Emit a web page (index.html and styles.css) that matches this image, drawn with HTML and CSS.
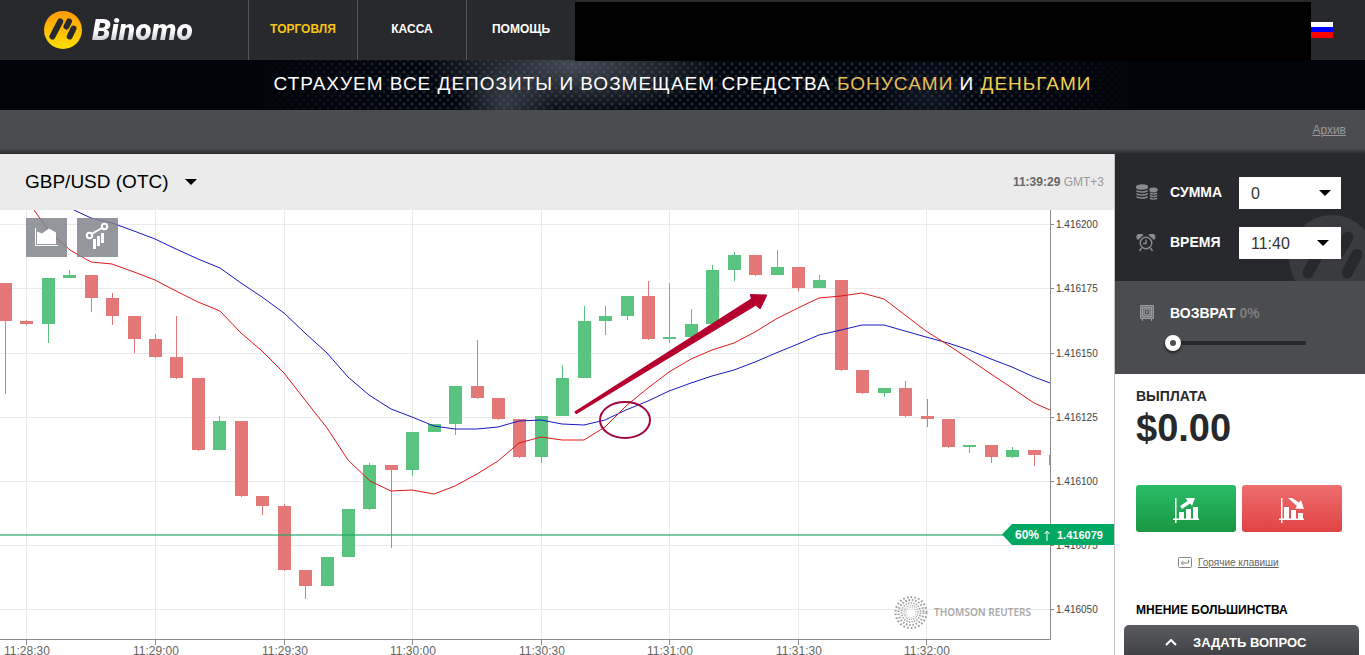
FILE: index.html
```
<!DOCTYPE html>
<html lang="ru">
<head>
    <meta charset="UTF-8">
    <meta name="viewport" content="width=device-width, initial-scale=1.0">
    <title>Binomo</title>

    <link rel="stylesheet" href="styles.css">
</head>
<body>
    <header class="header">
        <a class="logo" href="#">
            <svg class="logo-mark" viewBox="0 0 38 38">
                <defs>
                    <linearGradient id="gold" x1="0" y1="0" x2="0" y2="1">
                        <stop offset="0" stop-color="#ff9a05"/>
                        <stop offset="1" stop-color="#ffe000"/>
                    </linearGradient>
                </defs>
                <circle cx="19" cy="19" r="19" fill="url(#gold)"/>
                <path d="M8.4 25.5 16.2 10.5M22.5 15.500 25 10.5M25.7 25.5 29.500 17.5" stroke="#28292d" stroke-width="6" stroke-linecap="round"/>
            </svg>
            <span class="logo-text">Binomo</span>
        </a>
        <nav class="menu">
            <a class="active" href="#">ТОРГОВЛЯ</a>
            <a href="#">КАССА</a>
            <a href="#">ПОМОЩЬ</a>
        </nav>
        <div class="account"></div>
        <div class="lang">
            <svg class="flag" viewBox="0 0 22 16">
                <path fill="#fff" d="M0 0h22v5H0z"/>
                <path fill="#00f" d="M0 5h22v5H0z"/>
                <path fill="#f00" d="M0 10h22v6H0z"/>
            </svg>
        </div>
    </header>

    <div class="banner">
        <p>СТРАХУЕМ ВСЕ ДЕПОЗИТЫ И ВОЗМЕЩАЕМ СРЕДСТВА <span class="bonus">БОНУСАМИ</span> И <span class="money">ДЕНЬГАМИ</span></p>
    </div>

    <div class="subbar"><a href="#">Архив</a></div>

    <main class="trade">
        <section class="chart">
            <div class="chart-head">
                <button type="button" class="asset">GBP/USD (OTC)</button>
                <div class="clock"><b>11:39:29</b> GMT+3</div>
            </div>
            <div class="chart-body">
                <svg class="plot" viewBox="0 210 1114 445" preserveAspectRatio="xMinYMin slice">
                    <defs>
                        <clipPath id="area"><path d="M0 210h1050v429H0z"/></clipPath>
                    </defs>
                    <g id="grid"></g>
                    <g clip-path="url(#area)">
                        <g id="candles"></g>
                        <polyline class="ma blue" points="74,210 91,218 112,223 134,231 155,239 176,249 198,259 220,268 241,283 262,297 284,313 305,333 327,353 348,377 369,395 391,409 412,417 434,426 455,429 477,429 498,427 519,421 541,420 562,424 584,425 605,420 626,410 648,401 669,391 691,383 712,376 734,370 755,362 776,353 798,344 819,335 841,330 862,325 884,325 905,331 926,337 948,343 969,350 991,359 1012,367 1034,377 1050,383"/>
                        <polyline class="ma red" points="34,210 49,231 70,250 91,262 112,264 134,272 155,280 176,291 198,302 220,311 241,333 262,351 284,373 305,400 327,428 348,460 370,481 391,491 412,490 434,494 455,486 477,474 498,461 519,443 541,437 562,440 584,440 605,427 626,406 648,388 669,372 691,359 712,350 734,343 755,332 776,319 798,308 819,298 841,296 862,293 884,299 905,315 926,331 948,345 969,359 991,374 1012,388 1034,403 1050,410"/>
                    </g>
                    <path class="axis" d="M0 639.5H1050.5V210"/>
                    <g id="labels"></g>

                    <!-- Thomson Reuters -->
                    <g fill="none" stroke="#999">
                        <circle cx="911" cy="612.5" r="15.5" stroke-width="2" stroke-dasharray="1.6 2.2"/>
                        <circle cx="911" cy="612.5" r="12.5" stroke-width="2" stroke-dasharray="1.5 1.8"/>
                        <circle cx="911" cy="612.5" r="9.5" stroke-width="1.6" stroke-dasharray="1.3 1.3"/>
                        <circle cx="911" cy="612.5" r="7" stroke-width="1.2" stroke-dasharray="1 1"/>
                        <circle cx="911" cy="612.5" r="5" stroke-width=".8" stroke-dasharray=".8 .8"/>
                    </g>
                    <text class="reuters" x="934" y="616">THOMSON REUTERS</text>

                    <!-- current rate -->
                    <path class="rate-line" d="M0 535H1003"/>
                    <path fill="#00a862" d="M1002 534.5 1012 524h102v21h-102z"/>
                    <text class="rate-percent" x="1015" y="539">60%</text>
                    <path d="M1047 541v-10m-2.5 3 2.5-3 2.5 3" fill="none" stroke="#fff"/>
                    <text class="rate-value" x="1057" y="539">1.416079</text>

                    <!-- signal -->
                    <ellipse cx="625" cy="420" rx="25" ry="18" fill="none" stroke="#a3063c" stroke-width="2"/>
                    <path fill="#b5002f" stroke="#b5002f" stroke-width="2" stroke-linejoin="round" d="M575.500 412 752 299 751 295 766 295.500 760 308 756 304.500 576.500 413z"/>
                </svg>
                <div class="tools">
                    <button type="button" aria-label="Тип графика">
                        <svg viewBox="0 0 41 39">
                            <path d="M9.5 10v17.5H32" fill="none" stroke="#fff"/>
                            <path d="M11 26V13.5l5 2 7-5 7 4V26z" fill="#fff"/>
                        </svg>
                    </button>
                    <button type="button" aria-label="Индикаторы">
                        <svg viewBox="0 0 41 39">
                            <path d="M14.5 16 25 10" stroke="#fff" stroke-width="2"/>
                            <circle cx="12.5" cy="17.5" r="2.7" fill="none" stroke="#fff" stroke-width="2"/>
                            <circle cx="27.5" cy="8.5" r="2.7" fill="none" stroke="#fff" stroke-width="2"/>
                            <path d="M16 21h3v10h-3zM20 18h3v10h-3zM24 15h3v10h-3z" fill="#fff"/>
                        </svg>
                    </button>
                </div>
            </div>
        </section>

        <aside class="panel">
            <div class="deal">
                <svg class="watermark" viewBox="0 0 38 38">
                    <circle cx="19" cy="19" r="19" fill="#3a3b3f"/>
                    <path d="M8.4 25.5 16.5 10.5M22.5 16 26 9.8M25.7 25.5 30 17.5" stroke="#28292d" stroke-width="5" stroke-linecap="round"/>
                </svg>
                <div class="field">
                    <svg class="icon" viewBox="0 0 22 18" fill="none" stroke="#8a8b8e" stroke-width="1.4">
                        <ellipse cx="6" cy="3" rx="5.5" ry="2" fill="#8a8b8e"/>
                        <path d="M.5 6.500c1.5 2 9.500 2 11 0M.5 9.500c1.5 2 9.5 2 11 0M.5 12.500c1.5 2 9.5 2 11 0"/>
                        <ellipse cx="17.5" cy="6" rx="3.5" ry="1.7" fill="#8a8b8e"/>
                        <path d="M14 9c1 1.5 6 1.5 7 0M14 11.500c1 1.5 6 1.5 7 0M14 14c1 1.5 6 1.5 7 0"/>
                    </svg>
                    <label for="amount">СУММА</label>
                    <div class="select"><select id="amount"><option>0</option></select></div>
                </div>
                <div class="field time">
                    <svg class="icon" viewBox="0 0 22 18" fill="none" stroke="#8a8b8e" stroke-width="1.4">
                        <circle cx="10" cy="9" r="5.8"/>
                        <path d="M10 5.5v4H7M5.5 14l-2 3M14.5 14l2 3"/>
                        <path d="M2 5a3 3 0 0 1 4.5-4zM18 5a3 3 0 0 0-4.5-4z" fill="#8a8b8e"/>
                    </svg>
                    <label for="time">ВРЕМЯ</label>
                    <div class="select"><select id="time"><option>11:40</option></select></div>
                </div>
            </div>

            <div class="refund">
                <div class="refund-title">
                    <svg class="icon" viewBox="0 0 22 18" fill="none" stroke="#98999b">
                        <path d="M4.5 1.5h13v13h-13z" fill="#77787a"/>
                        <path d="M6.5 3.5h9v9h-9zM6.500 15v2M15.500 15v2"/>
                        <circle cx="11" cy="8" r="3" fill="#4a4b4e"/>
                        <circle cx="11" cy="8" r="1"/>
                    </svg>
                    <label for="refund">ВОЗВРАТ <span>0%</span></label>
                </div>
                <input type="range" id="refund" min="0" max="10" value="0">
            </div>

            <div class="payout">
                <h2>ВЫПЛАТА</h2>
                <p class="sum">$0.00</p>
                <div class="buttons">
                    <button type="button" class="up" aria-label="Выше">
                        <svg viewBox="0 0 26 25" fill="#fff">
                            <path d="M2 0h1.5v25H2zM0 20.5h26V22H0zM6 14h5v7H6zM13 11h5v10h-5zM20 9h5v12h-5z"/>
                            <path d="M7 8 14.500 3 12.500 0H22L19 8 17 5.500 9 11z"/>
                        </svg>
                    </button>
                    <button type="button" class="down" aria-label="Ниже">
                        <svg viewBox="0 0 26 25" fill="#fff">
                            <path d="M2 0h1.5v25H2zM0 20.5h25V22H0zM5 9h5v12H5zM12 12h5v9h-5zM19 15h5v6h-5z"/>
                            <path d="M9 0h4l7 4.500L22 2l3 9-9-.5L18 8z"/>
                        </svg>
                    </button>
                </div>
                <p class="hotkeys">
                    <svg viewBox="0 0 14 11" fill="none" stroke="#888">
                        <rect x=".5" y=".5" width="13" height="10" rx="1"/>
                        <path d="M10.5 3v3h-7M5.5 4l-2 2 2 2"/>
                    </svg>
                    <a href="#">Горячие клавиши</a>
                </p>
                <h3>МНЕНИЕ БОЛЬШИНСТВА</h3>
            </div>
        </aside>
    </main>

    <button type="button" class="ask">
        <svg viewBox="0 0 12 7" fill="none" stroke="#fff" stroke-width="2"><path d="M1 6l5-5 5 5"/></svg>
        ЗАДАТЬ ВОПРОС
    </button>

    <script src="script.js"></script>
</body>
</html>
```
FILE: styles.css
```
* {
    box-sizing: border-box;
}

body {
    margin: 0;
    font-family: "Liberation Sans", Arial, sans-serif;
    background-color: #ffffff;
    color: #28292d;
}

p, h2, h3 {
    margin: 0;
}

button {
    border: 0;
    padding: 0;
    font-family: inherit;
    cursor: pointer;
}

svg {
    display: block;
}

/* header */

.header {
    display: flex;
    height: 60px;
    background-color: #28292d;
}

.logo {
    display: flex;
    align-items: center;
    width: 248px;
    padding-left: 44px;
    gap: 10px;
    text-decoration: none;
}

.logo-mark {
    width: 38px;
    height: 38px;
}

.logo-text {
    font-family: Roboto, sans-serif;
    font-size: 30px;
    line-height: 40px;
    font-weight: 900;
    font-style: italic;
    color: transparent;
    background: linear-gradient(#ffffff 50%, #c4c6c9 80%);
    -webkit-background-clip: text;
    background-clip: text;
}

.menu {
    display: flex;
}

.menu a {
    display: flex;
    align-items: center;
    justify-content: center;
    width: 109px;
    padding-bottom: 2px;
    border-left: 1px solid #55565a;
    font-size: 12px;
    font-weight: bold;
    color: #ffffff;
    text-decoration: none;
}

.menu .active {
    color: #f9c316;
}

.account {
    position: relative;
    flex: 1;
    height: 59px;
    margin-top: 2px;
    background-color: #000000;
}

.lang {
    display: flex;
    align-items: center;
    width: 54px;
}

.flag {
    width: 22px;
    height: 16px;
}

/* banner */

.banner {
    display: flex;
    align-items: center;
    justify-content: center;
    height: 50px;
    padding-bottom: 2px;
    background:
        linear-gradient(90deg, #02040b 19%, transparent 30%, transparent 72%, #02040b 83%),
        radial-gradient(ellipse 150px 50px at 42% 10%, rgba(90, 97, 106, 0.75), transparent),
        radial-gradient(ellipse 50px 40px at 37% 90%, rgba(80, 88, 98, 0.6), transparent),
        radial-gradient(ellipse 50px 40px at 68% 70%, rgba(35, 48, 62, 0.4), transparent),
        radial-gradient(circle, #39414a, transparent 2px) 0 0 / 8px 8px,
        radial-gradient(circle, #2b333c, transparent 2px) 4px 4px / 8px 8px,
        #02060f;
}

.banner p {
    font-size: 19px;
    letter-spacing: 1px;
    color: #ffffff;
    white-space: nowrap;
}

.banner .bonus {
    color: #e8bd58;
}

.banner .money {
    color: #f0d050;
}

.subbar {
    display: flex;
    align-items: center;
    justify-content: flex-end;
    height: 44px;
    padding: 0 19px 4px 0;
    background: linear-gradient(#4b4c4f 88%, #28292d);
}

.subbar a {
    font-size: 12px;
    color: #98999b;
}

/* chart */

.trade {
    display: grid;
    grid-template-columns: 1fr 250px;
}

.chart {
    border-right: 1px solid #c4c4c4;
    min-width: 0;
}

.chart-head {
    display: flex;
    align-items: center;
    justify-content: space-between;
    height: 56px;
    padding: 0 10px 0 25px;
    background-color: #ebebeb;
}

.asset {
    display: flex;
    align-items: center;
    gap: 16px;
    background: none;
    font-size: 19px;
    color: #000000;
}

.asset::after,
.select::after {
    content: "";
    border: 6px solid transparent;
    border-top-color: #000000;
    border-bottom: 0;
}

.clock {
    font-size: 12px;
    color: #999999;
}

.clock b {
    color: #666666;
}

.chart-body {
    position: relative;
}

.plot {
    width: 100%;
    height: 445px;
}

.grid-line {
    stroke: #ebebeb;
}

.axis {
    fill: none;
    stroke: #8c8c8c;
}

.price {
    font-size: 10px;
    fill: #444444;
}

.moment {
    font-size: 12px;
    text-anchor: middle;
    fill: #666666;
}

.rise {
    fill: #59c480;
}

.fall {
    fill: #e47878;
}

.ma {
    fill: none;
}

.blue {
    stroke: #1818c0;
}

.red {
    stroke: #e01818;
}

.rate-line {
    stroke: #22a862;
    stroke-width: 2;
    stroke-opacity: 0.6;
}

.rate-percent,
.rate-value {
    font-size: 12px;
    font-weight: bold;
    fill: #ffffff;
}

.rate-value {
    font-size: 11px;
}

.reuters {
    font-family: "Noto Sans", sans-serif;
    font-size: 10px;
    font-weight: 600;
    fill: #aaaaaa;
}

.tools {
    position: absolute;
    top: 8px;
    left: 26px;
    display: flex;
    gap: 10px;
}

.tools button {
    width: 41px;
    height: 39px;
    background-color: rgba(125, 129, 135, 0.82);
}

/* right panel */

.deal {
    position: relative;
    overflow: hidden;
    height: 127px;
    padding: 23px 24px 0 21px;
    background-color: #28292d;
}

.watermark {
    position: absolute;
    top: 61px;
    right: -10px;
    width: 86px;
    height: 86px;
}

.field {
    position: relative;
    display: flex;
    align-items: center;
    height: 32px;
    margin-bottom: 18px;
}

.icon {
    width: 22px;
    height: 18px;
    margin-right: 12px;
}

.field label,
.refund label {
    flex: 1;
    font-size: 14px;
    font-weight: bold;
    color: #ffffff;
}

.field label {
    padding-bottom: 2px;
}

.select {
    position: relative;
    width: 102px;
    height: 32px;
}

.select::after {
    position: absolute;
    top: 13px;
    right: 10px;
    pointer-events: none;
}

.time .select::after {
    right: 12px;
}

.select select {
    width: 100%;
    height: 100%;
    padding: 0 12px;
    border: 0;
    border-radius: 0;
    appearance: none;
    background-color: #ffffff;
    font-family: inherit;
    font-size: 16px;
    color: #333333;
}

.refund {
    height: 93px;
    padding: 22px 59px 0 21px;
    background-color: #4b4c4f;
}

.refund-title {
    display: flex;
    align-items: center;
    height: 20px;
}

.refund label span {
    color: #7c7d80;
}

.refund input {
    display: block;
    width: 141px;
    height: 16px;
    margin: 12px 0 0 29px;
    appearance: none;
    background: linear-gradient(#28292d, #28292d) right center / 132px 4px no-repeat;
}

.refund input::-webkit-slider-thumb {
    appearance: none;
    width: 16px;
    height: 16px;
    border: 5px solid #ffffff;
    border-radius: 50%;
    background-color: #4b4c4f;
    box-shadow: 0 2px 3px rgba(0, 0, 0, 0.6);
}

.payout {
    padding: 14px 20px 0 21px;
}

.payout h2 {
    font-size: 14px;
    line-height: 16px;
}

.sum {
    font-size: 38px;
    font-weight: bold;
    line-height: 48px;
}

.buttons {
    display: flex;
    gap: 6px;
    margin-top: 33px;
}

.buttons button {
    display: flex;
    align-items: center;
    justify-content: center;
    width: 100px;
    height: 47px;
    padding-top: 3px;
    border-radius: 3px;
}

.buttons svg {
    width: 26px;
    height: 25px;
}

.up {
    background: linear-gradient(#29bd68, #1a9641);
}

.down {
    background: linear-gradient(#ee6e6e, #e04343);
}

.hotkeys {
    display: flex;
    align-items: center;
    gap: 6px;
    height: 14px;
    margin: 23px 0 0 42px;
    font-size: 10px;
}

.hotkeys svg {
    width: 14px;
    height: 11px;
}

.hotkeys a {
    color: #666666;
}

.payout h3 {
    margin-top: 34px;
    font-size: 12px;
    line-height: 15px;
    color: #000000;
    white-space: nowrap;
}

.ask {
    position: fixed;
    right: 6px;
    bottom: 0;
    display: flex;
    align-items: center;
    gap: 16px;
    width: 235px;
    height: 30px;
    padding: 4px 0 0 41px;
    border-radius: 5px 5px 0 0;
    background: linear-gradient(#5a5b5f, #414246);
    font-size: 13px;
    font-weight: bold;
    color: #ffffff;
}

.ask svg {
    width: 12px;
    height: 7px;
}
```
FILE: script.js
```
// top of body, bottom of body, high, low, 1 = rise
const candles = [
    [283, 321, 283, 394, 0], [321, 324, 320, 325, 0], [278, 324, 278, 343, 1], [275, 278, 270, 278, 1],
    [275, 298, 275, 312, 0], [298, 316, 293, 325, 0], [316, 339, 316, 353, 0], [339, 357, 334, 358, 0],
    [357, 378, 316, 379, 0], [378, 450, 378, 451, 0], [421, 450, 416, 450, 1], [421, 496, 421, 497, 0],
    [496, 506, 496, 515, 0], [506, 570, 504, 571, 0], [570, 586, 570, 599, 0], [557, 586, 557, 586, 1],
    [509, 557, 509, 557, 1], [465, 509, 463, 510, 1], [465, 470, 465, 548, 0], [432, 470, 432, 476, 1],
    [424, 432, 424, 432, 1], [386, 424, 386, 435, 1], [386, 398, 340, 399, 0], [398, 419, 398, 420, 0],
    [419, 457, 419, 458, 0], [416, 457, 416, 463, 1], [378, 416, 365, 416, 1], [321, 378, 306, 378, 1],
    [316, 321, 306, 335, 1], [296, 316, 296, 320, 1], [296, 339, 281, 340, 0], [337, 339, 283, 343, 1],
    [324, 337, 309, 337, 1], [270, 324, 265, 324, 1], [255, 270, 252, 281, 1], [255, 275, 255, 276, 0],
    [267, 275, 250, 275, 1], [267, 288, 267, 291, 0], [280, 288, 275, 288, 1], [280, 370, 280, 371, 0],
    [370, 393, 370, 394, 0], [388, 393, 388, 397, 1], [388, 416, 381, 417, 0], [416, 419, 399, 427, 0],
    [419, 447, 419, 448, 0], [445, 447, 445, 453, 1], [445, 457, 445, 463, 0], [450, 457, 447, 458, 1],
    [450, 455, 450, 466, 0], [455, 465, 455, 465, 0]
];

const prices = [[224, '1.416200'], [288, '1.416175'], [353, '1.416150'], [417, '1.416125'], [481, '1.416100'], [545, '1.416075'], [609, '1.416050']];
const times = [[26, '11:28:30'], [155, '11:29:00'], [284, '11:29:30'], [412, '11:30:00'], [541, '11:30:30'], [669, '11:31:00'], [798, '11:31:30'], [926, '11:32:00']];

let grid = '';
let labels = '';

prices.forEach(([y, text]) => {
    grid += `<path class="grid-line" d="M0 ${y + 0.5}H1050"/>`;
    labels += `<path class="axis" d="M1050 ${y + 0.5}h4"/><text class="price" x="1056" y="${y + 4}">${text}</text>`;
});

times.forEach(([x, text]) => {
    grid += `<path class="grid-line" d="M${x + 0.5} 210V639"/>`;
    labels += `<path class="axis" d="M${x + 0.5} 639v6"/><text class="moment" x="${x + 1}" y="655">${text}</text>`;
});

document.getElementById('grid').innerHTML = grid;
document.getElementById('labels').innerHTML = labels;

document.getElementById('candles').innerHTML = candles.map(([top, bottom, high, low, rise], i) => {
    const x = Math.round(5.05 + i * 21.43);
    return `<path class="${rise ? 'rise' : 'fall'}" d="M${x - 6} ${top}h13V${bottom}h-13zM${x} ${high}h1V${low}h-1z"/>`;
}).join('');
```
